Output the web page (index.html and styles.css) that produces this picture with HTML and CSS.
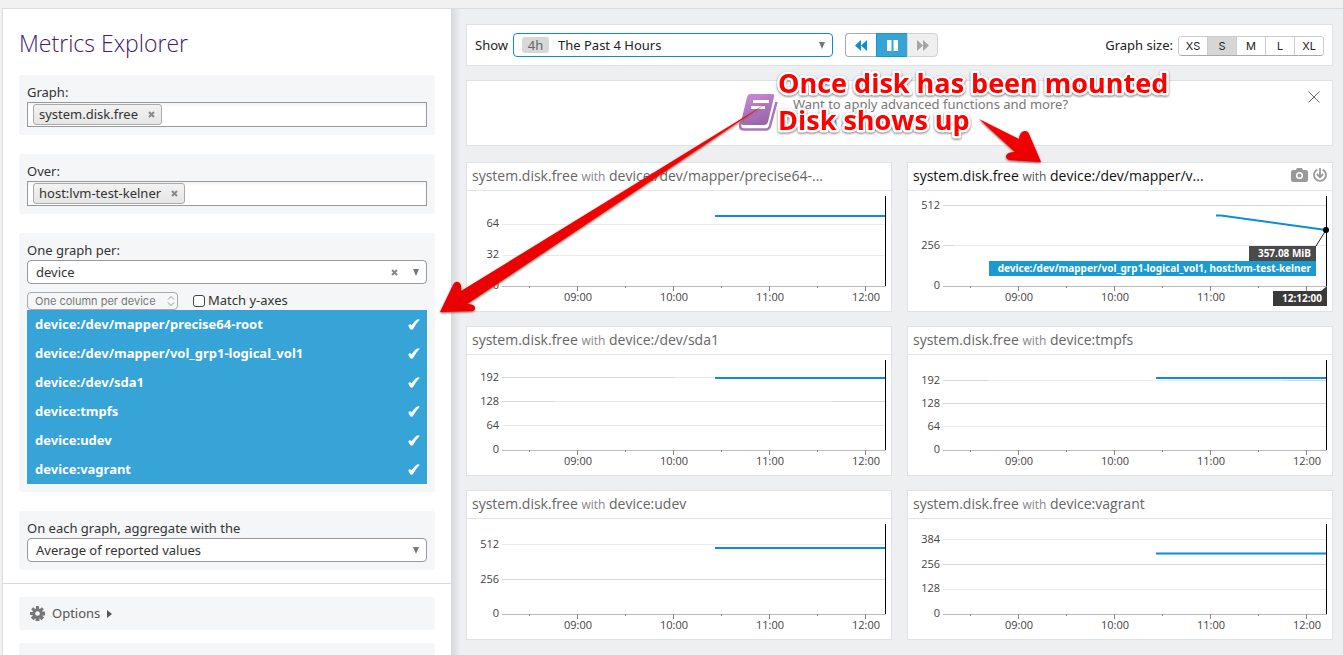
FILE: index.html
```html
<!DOCTYPE html>
<html lang="en">
<head>
<meta charset="utf-8">
<title>Metrics Explorer</title>
<link rel="stylesheet" href="styles.css">
</head>
<body>
<svg class="defs" width="0" height="0" aria-hidden="true">
  <defs>
    <g id="axis">
      <path class="axis" d="M35 95.5H419"/>
      <path class="tick" d="M110.5 95v5M206.5 95v5M302.5 95v5M398.5 95v5M62.5 95v2M158.5 95v2M254.5 95v2M350.5 95v2"/>
    </g>
    <path id="cursor" class="cursor" d="M418.5 5V95"/>
    <path id="tick-mark" d="M.3 6.300Q1.800 4.300 3.700 6.300Q6.500 1.500 10 .2Q11.800 0 11.500 1Q8 4.500 5.300 9.700Q3.800 11.500 2.300 10.300Q.8 8.500.3 6.300Z"/>
  </defs>
</svg>
<div class="page">
  <aside class="sidebar">
    <h1>Metrics Explorer</h1>
    <section class="panel">
      <label for="graph">Graph:</label>
      <div class="tokens"><span class="chip">system.disk.free <button type="button" aria-label="Remove"><svg width="7" height="7" viewBox="0 0 7 7"><path d="M1 1l5 5M6 1L1 6"/></svg></button></span><input id="graph" type="text"></div>
    </section>
    <section class="panel">
      <label for="over">Over:</label>
      <div class="tokens"><span class="chip">host:lvm-test-kelner <button type="button" aria-label="Remove"><svg width="7" height="7" viewBox="0 0 7 7"><path d="M1 1l5 5M6 1L1 6"/></svg></button></span><input id="over" type="text"></div>
    </section>
    <section class="panel">
      <label for="per">One graph per:</label>
      <div class="picker">
        <select id="per"><option>device</option></select>
        <button class="clear" type="button" aria-label="Clear"><svg width="7" height="7" viewBox="0 0 7 7"><path d="M1 1l5 5M6 1L1 6"/></svg></button>
        <svg class="caret" width="6" height="7" viewBox="0 0 6 7"><path d="M0 0h6L3 7z"/></svg>
      </div>
      <div class="options-row">
        <div class="mini">
          <select aria-label="Columns"><option>One column per device</option></select>
          <svg width="8" height="12" viewBox="0 0 8 12"><path d="M1 4.500L4 1.500l3 3M1 7.500l3 3 3-3"/></svg>
        </div>
        <label class="check"><input type="checkbox">Match y-axes</label>
      </div>
      <ul class="devices">
        <li>device:/dev/mapper/precise64-root<svg viewBox="0 0 12 11"><use href="#tick-mark"/></svg></li>
        <li>device:/dev/mapper/vol_grp1-logical_vol1<svg viewBox="0 0 12 11"><use href="#tick-mark"/></svg></li>
        <li>device:/dev/sda1<svg viewBox="0 0 12 11"><use href="#tick-mark"/></svg></li>
        <li>device:tmpfs<svg viewBox="0 0 12 11"><use href="#tick-mark"/></svg></li>
        <li>device:udev<svg viewBox="0 0 12 11"><use href="#tick-mark"/></svg></li>
        <li>device:vagrant<svg viewBox="0 0 12 11"><use href="#tick-mark"/></svg></li>
      </ul>
    </section>
    <section class="panel">
      <label for="agg">On each graph, aggregate with the</label>
      <div class="picker">
        <select id="agg"><option>Average of reported values</option></select>
        <svg class="caret" width="6" height="7" viewBox="0 0 6 7"><path d="M0 0h6L3 7z"/></svg>
      </div>
    </section>
    <hr>
    <button class="panel fold" type="button">
      <svg width="15" height="15" viewBox="0 0 16 16"><g fill="#777"><circle cx="8" cy="8" r="5.500"/><path d="M6.500 0h3l.6 16H5.900zM0 6.500v3l16 .6V5.900z"/><path d="M6.500 0h3l.6 16H5.900zM0 6.500v3l16 .6V5.900z" transform="rotate(45 8 8)"/></g><circle cx="8" cy="8" r="2.500" fill="#f5f6f8"/></svg>
      Options
      <svg width="5" height="8" viewBox="0 0 5 8"><path d="M0 0l5 4-5 4z" fill="#555"/></svg>
    </button>
    <div class="panel fold"></div>
  </aside>

  <main class="main">
    <div class="toolbar">
      <label for="range">Show</label>
      <div class="picker range">
        <select id="range"><option>The Past 4 Hours</option></select>
        <span class="badge">4h</span>
        <svg class="caret" width="6" height="7" viewBox="0 0 6 7"><path d="M0 0h6L3 7z"/></svg>
      </div>
      <div class="transport">
        <button type="button" aria-label="Back"><svg width="12" height="11" viewBox="0 0 12 11"><path d="M6 0v11L0 5.500zM12 0v11L6 5.500z" fill="#0c8ecf"/></svg></button>
        <button type="button" class="on" aria-label="Pause"><svg width="11" height="11" viewBox="0 0 11 11"><path d="M0 0h4.500v11H0zM6.500 0H11v11H6.500z" fill="#fff"/></svg></button>
        <button type="button" class="off" aria-label="Forward"><svg width="12" height="11" viewBox="0 0 12 11"><path d="M0 0v11l6-5.500zM6 0v11l6-5.500z" fill="#a5a5a5"/></svg></button>
      </div>
      <span class="size-label">Graph size:</span>
      <div class="sizes"><button type="button">XS</button><button type="button" class="on">S</button><button type="button">M</button><button type="button">L</button><button type="button">XL</button></div>
    </div>

    <div class="banner">
      <svg width="40" height="38" viewBox="0 0 40 38">
        <defs><linearGradient id="book" x1="0" y1="0" x2=".4" y2="1"><stop offset="0" stop-color="#cd8ade"/><stop offset="1" stop-color="#9a68a8"/></linearGradient></defs>
        <path fill="url(#book)" d="M11 0H33q3 0 2 3L29 28q-1 3-4 3H5Q1 31 2 28L8 3Q9 0 11 0z"/>
        <path fill="none" stroke="#a678b6" stroke-width="2.500" d="M37.500 8L31 32q-1 3.500-4 3.500H5q-4 0-4-4l1-4"/>
        <path stroke="#fff" stroke-width="3" d="M14 7.500h16M12 13.500h14"/>
      </svg>
      <div class="pitch">Want to apply advanced functions and more?<a href="#">Launch a Notebook</a></div>
      <button class="close" type="button" aria-label="Close"><svg width="12" height="12" viewBox="0 0 12 12"><path d="M.5.500l11 11M11.500.500l-11 11"/></svg></button>
    </div>

    <div class="grid">
      <article class="card">
        <header><h2>system.disk.free <small>with</small> device:/dev/mapper/precise64-...</h2></header>
        <svg class="chart" viewBox="0 0 424 120">
          <path class="grid-line light" d="M35 33.500H418M35 64.500H418"/>
          <g class="y"><text x="32" y="36">64</text><text x="32" y="67">32</text><text x="32" y="98">0</text></g>
          <g class="x"><text x="111" y="110">09:00</text><text x="207" y="110">10:00</text><text x="303" y="110">11:00</text><text x="399" y="110">12:00</text></g>
          <use href="#axis"/><path class="series" d="M248 25H418"/><use href="#cursor"/>
        </svg>
      </article>
      <article class="card active">
        <header><h2>system.disk.free <small>with</small> device:/dev/mapper/v...</h2>
          <button type="button" aria-label="Snapshot"><svg width="17" height="14" viewBox="0 0 17 14"><path fill="#999" d="M2 2h3l1-2h5l1 2h3q2 0 2 2v8q0 2-2 2H2q-2 0-2-2V4q0-2 2-2z"/><circle cx="8.500" cy="7.500" r="2.800" fill="none" stroke="#fff" stroke-width="1.600"/></svg></button>
          <button type="button" aria-label="Download"><svg width="14" height="14" viewBox="0 0 14 14" fill="none" stroke="#999" stroke-width="1.800"><path d="M4.500 1.500A6 6 0 1 0 9.500 1.500M7 0v9M3.800 6L7 9.300 10.200 6"/></svg></button>
        </header>
        <svg class="chart" viewBox="0 0 424 120">
          <path class="grid-line" d="M35 14.500H418M35 54.500H47"/><path class="grid-line light" d="M47 54.500H418"/>
          <g class="y"><text x="32" y="18">512</text><text x="32" y="58">256</text><text x="32" y="98">0</text></g>
          <g class="x"><text x="111" y="110">09:00</text><text x="207" y="110">10:00</text><text x="303" y="110">11:00</text></g>
          <use href="#axis"/><path class="series" d="M308 24.500H313L418 39"/>
          <path class="lead" d="M408 55L418 39"/><use href="#cursor"/><circle cx="418" cy="39" r="3"/>
          <path fill="#4a4a4a" d="M341 55H408V70H341z"/><path fill="#1b9ad2" d="M81 70H408V85H81z"/>
          <path fill="#3a3a3a" d="M365 100H413L419 95V115H365z"/>
          <g class="tags"><text x="403" y="66">357.08 MiB</text><text x="403" y="81">device:/dev/mapper/vol_grp1-logical_vol1, host:lvm-test-kelner</text><text x="414" y="111">12:12:00</text></g>
        </svg>
      </article>
      <article class="card">
        <header><h2>system.disk.free <small>with</small> device:/dev/sda1</h2></header>
        <svg class="chart" viewBox="0 0 424 120">
          <path class="grid-line" d="M35 22.500H208M35 46.500H88M365 46.500H418"/><path class="grid-line light" d="M208 22.500H248M88 46.500H365M35 70.500H418"/>
          <g class="y"><text x="32" y="26">192</text><text x="32" y="50">128</text><text x="32" y="74">64</text><text x="32" y="98">0</text></g>
          <g class="x"><text x="111" y="110">09:00</text><text x="207" y="110">10:00</text><text x="303" y="110">11:00</text><text x="399" y="110">12:00</text></g>
          <use href="#axis"/><path class="series" d="M248 23H418"/><use href="#cursor"/>
        </svg>
      </article>
      <article class="card">
        <header><h2>system.disk.free <small>with</small> device:tmpfs</h2></header>
        <svg class="chart" viewBox="0 0 424 120">
          <path class="grid-line" d="M35 25.500H80M374 25.500H418M35 48.500H418"/><path class="grid-line light" d="M80 25.500H374M35 71.500H418"/>
          <g class="y"><text x="32" y="29">192</text><text x="32" y="52">128</text><text x="32" y="75">64</text><text x="32" y="98">0</text></g>
          <g class="x"><text x="111" y="110">09:00</text><text x="207" y="110">10:00</text><text x="303" y="110">11:00</text><text x="399" y="110">12:00</text></g>
          <use href="#axis"/><path class="series" d="M248 23H418"/><use href="#cursor"/>
        </svg>
      </article>
      <article class="card">
        <header><h2>system.disk.free <small>with</small> device:udev</h2></header>
        <svg class="chart" viewBox="0 0 424 120">
          <path class="grid-line" d="M35 60.500H418"/><path class="grid-line light" d="M35 25.500H418"/>
          <g class="y"><text x="32" y="29">512</text><text x="32" y="64">256</text><text x="32" y="98">0</text></g>
          <g class="x"><text x="111" y="110">09:00</text><text x="207" y="110">10:00</text><text x="303" y="110">11:00</text><text x="399" y="110">12:00</text></g>
          <use href="#axis"/><path class="series" d="M248 29H418"/><use href="#cursor"/>
        </svg>
      </article>
      <article class="card">
        <header><h2>system.disk.free <small>with</small> device:vagrant</h2></header>
        <svg class="chart" viewBox="0 0 424 120">
          <path class="grid-line" d="M35 45.500H418"/><path class="grid-line light" d="M35 20.500H418M35 70.500H418"/>
          <g class="y"><text x="32" y="24">384</text><text x="32" y="49">256</text><text x="32" y="73">128</text><text x="32" y="98">0</text></g>
          <g class="x"><text x="111" y="110">09:00</text><text x="207" y="110">10:00</text><text x="303" y="110">11:00</text><text x="399" y="110">12:00</text></g>
          <use href="#axis"/><path class="series" d="M248 34.500H418"/><use href="#cursor"/>
        </svg>
      </article>
    </div>
  </main>

  <svg class="notes" width="1200" height="330" viewBox="0 0 1200 330">
    <defs><linearGradient id="red" x1="0" y1="0" x2="0" y2="1"><stop offset="0" stop-color="#f00"/><stop offset="1" stop-color="#e80000"/></linearGradient></defs>
    <g class="callout"><text x="778" y="93">Once disk has been mounted</text><text x="778" y="130">Disk shows up</text></g>
    <g class="arrows">
      <path d="M767 103L583 216 461 291Q462 283 458 282Q455 281 453 285L440 312 471 311Q475 311 475 308Q475 304 467 304L585 225Z"/>
      <path d="M979 119L1019 139Q1020 131 1025 131Q1028 131 1029 134L1041 162 1010 160Q1006 159 1006 156Q1007 152 1015 152Z"/>
    </g>
  </svg>
</div>
</body>
</html>
```
FILE: styles.css
```css
* { box-sizing: border-box; }
body {
  margin: 0;
  background: #f1f1f1;
  font: 13px/19px "Noto Sans", "Open Sans", sans-serif;
  color: #333;
}
button, input, select { font: inherit; color: inherit; margin: 0; }
.defs { position: absolute; }
.page {
  position: relative;
  display: flex;
  height: 100vh;
  overflow: hidden;
  padding: 8px 0 0 2px;
}
.sidebar {
  flex: 0 0 449px;
  padding: 18px 16px 0;
  background: #fff;
  border: 1px solid #dcdcdc;
  border-width: 1px 0 0 1px;
}
h1 {
  margin: 0 0 16px;
  font: 300 23px/32px "Open Sans", sans-serif;
  color: #44206b;
}
.panel {
  display: block;
  margin-bottom: 19px;
  padding: 8px;
  background: #f5f6f8;
  border-radius: 3px;
}
.panel > label { display: block; }
.tokens {
  display: flex;
  height: 25px;
  padding: 1px 5px;
  background: linear-gradient(#f2f2f2, #fff 4px);
  border: 1px solid #999;
}
.tokens input { flex: 1; min-width: 0; border: 0; outline: 0; background: none; }
.chip {
  display: flex;
  align-items: center;
  gap: 10px;
  padding: 0 6px 0 5px;
  background: linear-gradient(#f2f2f2, #e6e6e6);
  border: 1px solid #aaa;
  border-radius: 3px;
}
.chip button, .clear { display: flex; padding: 0; border: 0; background: none; }
.chip path, .clear path { stroke: #888; stroke-width: 2; }
.picker { position: relative; }
.picker select {
  display: block;
  width: 100%;
  height: 24px;
  padding: 0 8px;
  appearance: none;
  background: #fff;
  border: 1px solid #999;
  border-radius: 4px;
}
.caret { position: absolute; right: 8px; top: 9px; fill: #777; pointer-events: none; }
.clear { position: absolute; right: 29px; top: 9px; }
.options-row { display: flex; align-items: flex-end; gap: 15px; height: 26px; }
.mini { position: relative; width: 151px; }
.mini select {
  display: block;
  width: 100%;
  height: 18px;
  padding: 0 7px;
  appearance: none;
  background: none;
  border: 1px solid #aaa;
  border-radius: 4px;
  font: 11px/14px Inter, sans-serif;
  color: #777;
}
.mini svg { position: absolute; right: 3px; top: 3px; fill: none; stroke: #999; pointer-events: none; }
.check { display: flex; align-items: center; gap: 3px; }
.check input {
  width: 12px;
  height: 12px;
  appearance: none;
  background: #fff;
  border: 1px solid #444;
  border-radius: 3px;
}
.devices { margin: 0; padding: 0; list-style: none; background: #36a4d7; color: #fff; font-weight: 700; }
.devices li { display: flex; align-items: center; justify-content: space-between; height: 29px; padding: 0 7px 0 8px; }
.devices svg { width: 12px; height: 11px; fill: #fff; }
hr { margin: -6px -16px 13px; border: 0; border-top: 1px solid #d8d8d8; }
.fold {
  display: flex;
  align-items: center;
  gap: 7px;
  width: 100%;
  height: 33px;
  margin-bottom: 13px;
  padding: 0 11px;
  border: 0;
  color: #555;
}
.main {
  flex: 1;
  min-width: 0;
  padding: 15px 10px 0 15px;
  background: linear-gradient(90deg, #d6d9db, #edeff1 10px);
  border-top: 1px solid #dcdcdc;
}
.toolbar, .banner, .card { background: #fff; border: 1px solid #dfe1e3; }
.toolbar { display: flex; align-items: center; height: 42px; padding: 0 8px; margin-bottom: 14px; color: #222; }
.range { flex: 0 0 320px; margin: 0 12px 0 5px; }
.range select { padding-left: 44px; border-color: #0c8ecf; }
.badge {
  position: absolute;
  left: 9px;
  top: 4px;
  width: 27px;
  background: #d8d8d8;
  border-radius: 3px;
  color: #666;
  line-height: 16px;
  text-align: center;
  pointer-events: none;
}
.transport { display: flex; height: 24px; }
.transport button {
  display: flex;
  align-items: center;
  justify-content: center;
  width: 31px;
  padding: 0;
  background: #fff;
  border: 1px solid #aaa;
  border-right: 0;
}
.transport button:first-child { border-radius: 4px 0 0 4px; }
.transport .on { background: #36a4d7; border-color: #1c94cc; }
.transport .off { background: #efefef; border: 1px solid #d2d2d2; border-radius: 0 4px 4px 0; }
.size-label { margin: 0 5px 0 auto; }
.sizes { display: flex; margin-top: 2px; border: 1px solid #ccc; border-bottom-color: #aaa; border-radius: 4px; overflow: hidden; }
.sizes button {
  width: 29px;
  height: 18px;
  padding: 0;
  background: #fff;
  border: 0;
  border-left: 1px solid #ccc;
  font: 11px/18px Inter, sans-serif;
}
.sizes button:first-child { width: 28px; border-left: 0; }
.sizes .on { background: #d6d6d6; }
.banner {
  position: relative;
  display: flex;
  align-items: center;
  justify-content: center;
  gap: 14px;
  height: 66px;
  margin-bottom: 16px;
  padding-left: 8px;
}
.pitch { color: #777; font-size: 13px; line-height: 18px; }
.pitch a { display: block; color: #0c8ecf; text-decoration: none; }
.close { position: absolute; right: 12px; top: 10px; display: flex; padding: 0; border: 0; background: none; }
.close path { stroke: #666; }
.grid { display: grid; grid-template-columns: 1fr 1fr; gap: 14px 15px; }
.card header { display: flex; align-items: center; gap: 5px; height: 28px; padding: 0 5px; border-bottom: 1px solid #e4e6e8; }
.card h2 { flex: 1; margin: 0; font: 14px/20px "Open Sans", sans-serif; color: #666; }
.card small { font-size: 12px; color: #888; }
.card.active h2 { color: #111; }
.card.active small { color: #555; }
.card header button { display: flex; padding: 0 0 4px; border: 0; background: none; }
.chart { display: block; width: 100%; height: auto; font: 11px "Open Sans", sans-serif; fill: #444; }
.y, .tags { text-anchor: end; }
.x { text-anchor: middle; }
.axis, .tick, .grid-line, .cursor { shape-rendering: crispEdges; fill: none; stroke: #bbb; }
.tick { stroke: #888; }
.grid-line { stroke: #d8d8d8; }
.light { stroke: #eaeaea; }
.cursor { stroke: #000; }
.series { fill: none; stroke: #0c8ecf; stroke-width: 2; }
.lead { stroke: #222; }
.chart circle { fill: #000; }
.tags { font: 700 10px "Noto Sans", sans-serif; fill: #fff; }
.notes { position: absolute; left: 0; top: 0; pointer-events: none; }
.callout {
  font: 700 27px "Open Sans", sans-serif;
  fill: #f00;
  stroke: #fff;
  stroke-width: 5px;
  stroke-linejoin: round;
  paint-order: stroke;
  filter: drop-shadow(0 1px 1px #777);
}
.arrows { fill: url(#red); filter: drop-shadow(0 1px 1px #844); }
```
